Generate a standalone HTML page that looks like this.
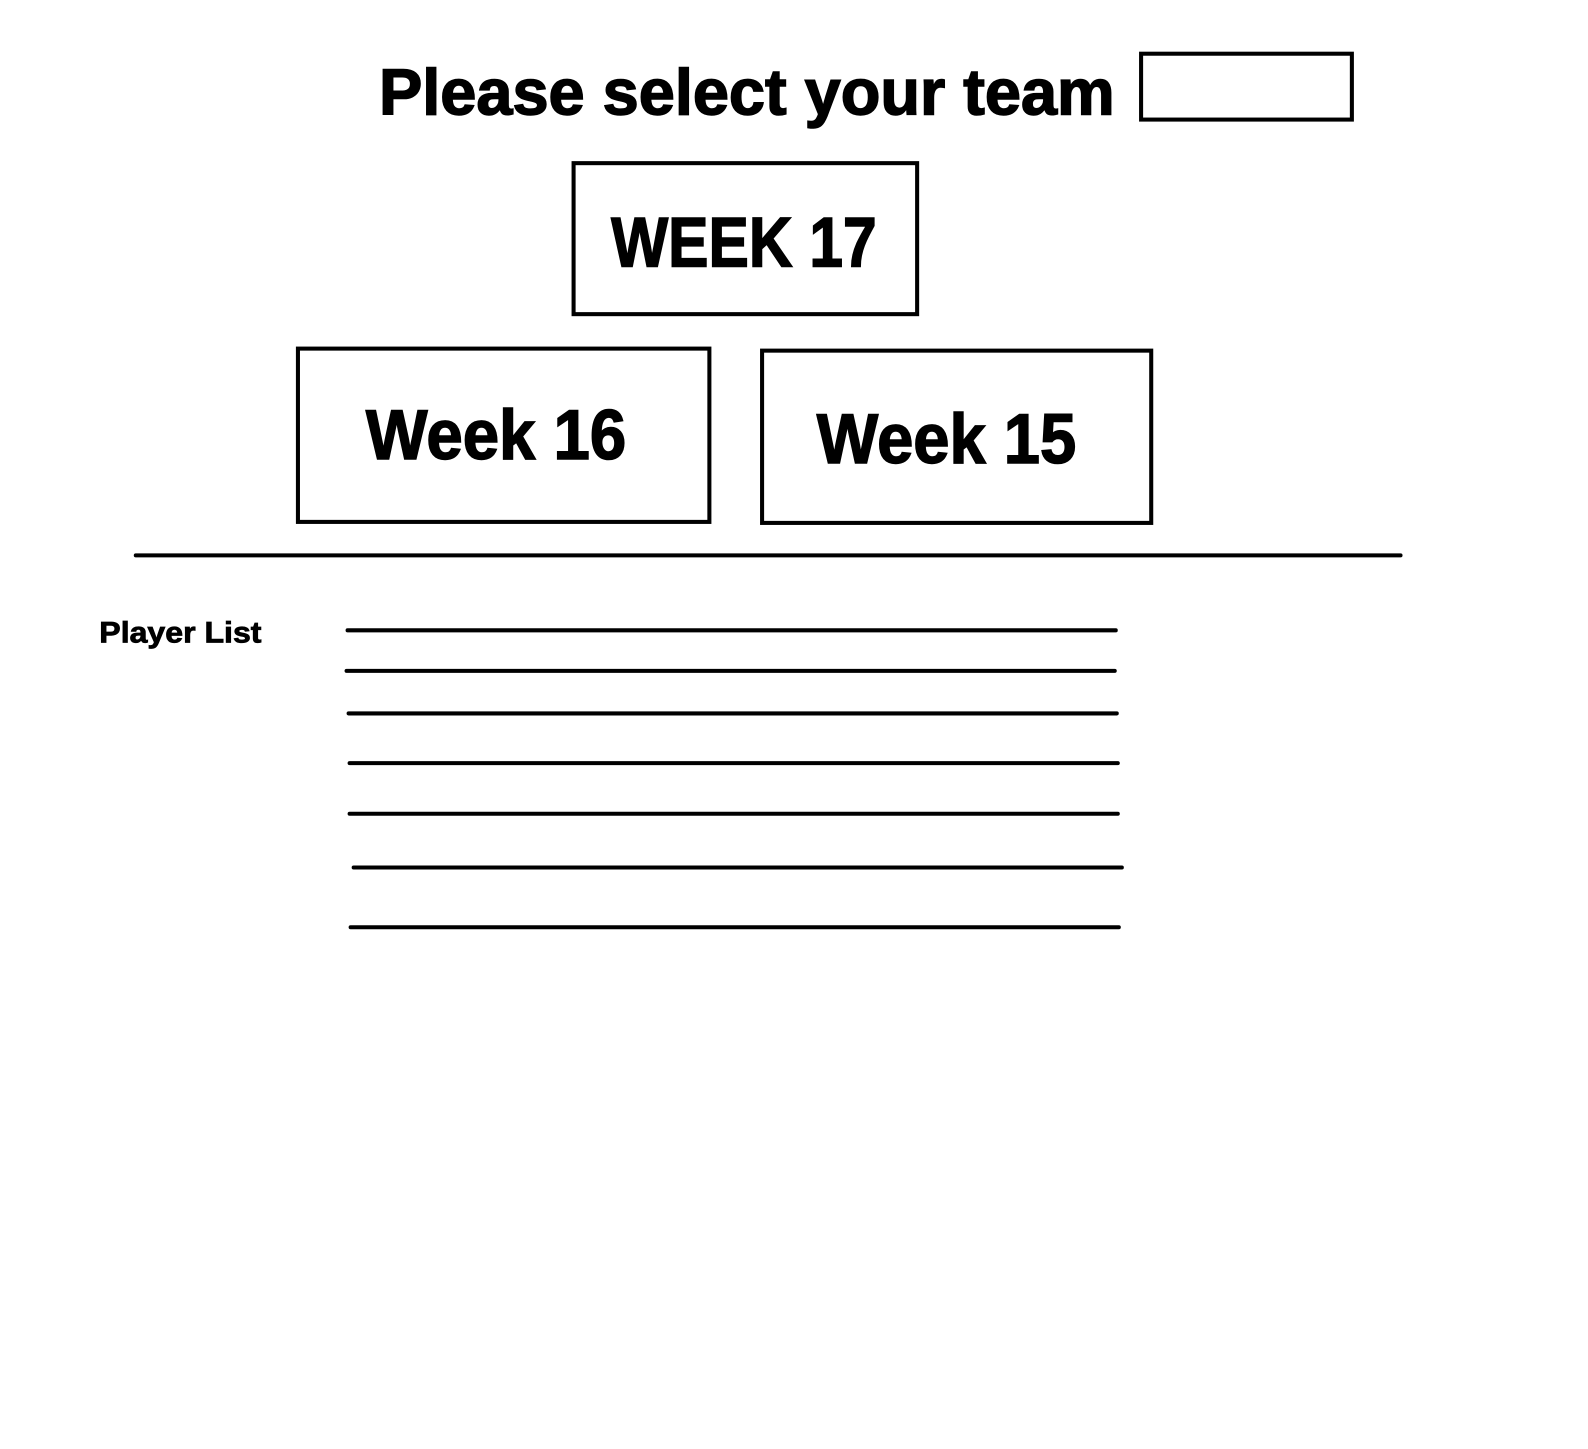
<!DOCTYPE html>
<html><head><meta charset="utf-8"><style>
html,body{margin:0;padding:0;background:#fff;width:1588px;height:1449px;overflow:hidden}
svg{display:block}
text{font-family:"Liberation Sans",sans-serif;font-weight:bold;fill:#000;stroke:#000;stroke-width:1.5}
</style></head><body>
<svg width="1588" height="1449" viewBox="0 0 1588 1449">
<g transform="scale(1.0134)">
<g fill="none" stroke="#000" stroke-width="4" stroke-linecap="round">
<rect x="1126" y="53" width="208" height="65"/>
<rect x="566" y="161" width="339" height="149"/>
<rect x="294" y="344" width="406" height="171"/>
<rect x="752" y="346" width="384" height="170"/>
<line x1="134" y1="548" x2="1382" y2="548"/>
<line x1="343" y1="622" x2="1101" y2="622"/>
<line x1="342" y1="662" x2="1100" y2="662"/>
<line x1="344" y1="704" x2="1102" y2="704"/>
<line x1="345" y1="753" x2="1103" y2="753"/>
<line x1="345" y1="803" x2="1103" y2="803"/>
<line x1="349" y1="856" x2="1107" y2="856"/>
<line x1="346" y1="915" x2="1104" y2="915"/>
</g>
<text x="374" y="113" font-size="64" textLength="726" lengthAdjust="spacingAndGlyphs">Please select your team</text>
<text x="603" y="263" font-size="70" textLength="262" lengthAdjust="spacingAndGlyphs">WEEK 17</text>
<text x="361" y="453" font-size="70" textLength="257" lengthAdjust="spacingAndGlyphs">Week 16</text>
<text x="806" y="457" font-size="70" textLength="256" lengthAdjust="spacingAndGlyphs">Week 15</text>
<text x="98" y="634" font-size="29" textLength="160" lengthAdjust="spacingAndGlyphs" style="stroke-width:0.8">Player List</text>
</g>
</svg>
</body></html>
